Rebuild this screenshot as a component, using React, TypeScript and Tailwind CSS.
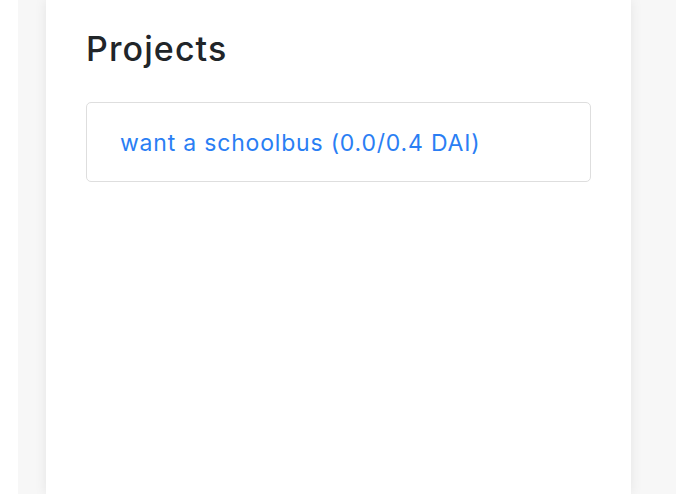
const projects = [{ id: 1, title: "want a schoolbus", raised: "0.0", goal: "0.4", token: "DAI" }];

export default function App() {
  return (
    <div className="h-[494px] w-full overflow-hidden bg-white pl-[18px] pr-[19px] font-['Inter',sans-serif]">
      <div className="flex h-full bg-[#f7f7f7] pl-[28px]">
        <div className="h-full w-[585px] bg-white pl-[40px] pr-[40px] pt-[25px] shadow-[0_0_12px_rgba(0,0,0,0.08)]">
          <h2 className="text-[34px] font-medium leading-[48px] tracking-[1.1px] text-[#212529]">Projects</h2>
          <ul className="mt-[29px]">
            {projects.map((p) => (
              <li key={p.id} className="flex h-[80px] items-center rounded-[5px] border border-[#dedede] px-[33px] pt-[2px]">
                <a href="#" className="text-[23px] tracking-[0.8px] text-[#2a7ef4]">
                  {p.title} ({p.raised}/{p.goal} {p.token})
                </a>
              </li>
            ))}
          </ul>
        </div>
      </div>
    </div>
  );
}
